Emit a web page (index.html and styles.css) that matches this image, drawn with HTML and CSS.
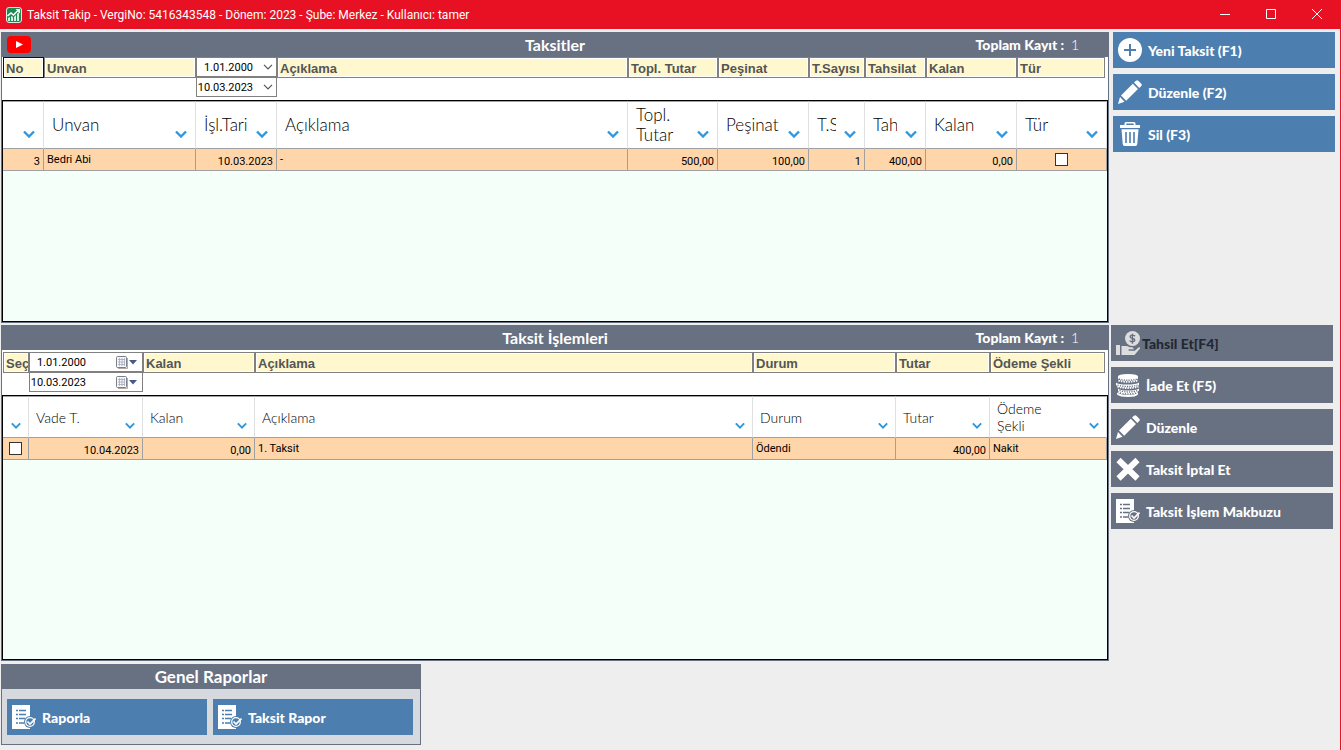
FILE: index.html
```html
<!DOCTYPE html>
<html lang="tr">
<head>
<meta charset="utf-8">
<title>Taksit Takip</title>
<link rel="stylesheet" href="styles.css">
</head>
<body>
<svg class="icon-defs" aria-hidden="true">
  <symbol id="i-down" viewBox="0 0 12 8"><path d="M1 1.5 6 6.5 11 1.5" fill="none" stroke="#2f97dd" stroke-width="2.4"/></symbol>
  <symbol id="i-chev" viewBox="0 0 10 6"><path d="M1 .8 5 4.8 9 .8" fill="none" stroke="#555" stroke-width="1.2"/></symbol>
  <symbol id="i-cal" viewBox="0 0 22 14">
    <rect x="1.5" y="1.5" width="10" height="11" rx="1" fill="#f6f7fa" stroke="#7d7d86"/>
    <path d="M3 4.5h7M3 7h7M3 9.500h7M4.500 3v8M7 3v8M9.500 3v8" stroke="#a3a9bd" stroke-width=".8"/>
    <path d="M12.500 3v10.500H3" fill="none" stroke="#b9a9a4"/>
    <path d="M14 5h8l-4 4.500z" fill="#47598a"/>
  </symbol>
  <symbol id="i-plus" viewBox="0 0 24 24"><circle cx="12" cy="12" r="12" fill="#fff"/><path d="M12 6v12M6 12h12" stroke="#4c7eaf" stroke-width="2"/></symbol>
  <symbol id="i-pencil" viewBox="0 0 24 24"><path fill="#fff" d="M0 24 2 17 6.500 21.800zM3 15.500 14.800 3.800 20 9 8.200 20.800zM16 2.600 18 .7q1.200-1 2.300 0l3 3q1 1.200 0 2.300l-2 2z"/></symbol>
  <symbol id="i-trash" viewBox="0 0 24 24">
    <path fill="#fff" fill-rule="evenodd" d="M8 0h8q1.500 0 1.500 1.500V3H22v3H2V3h4.500V1.500Q6.500 0 8 0zM8.300 1.600V3h7.400V1.600zM3.500 7.200h17L19.300 22q-.2 2-2 2H6.700q-1.800 0-2-2z"/>
    <path d="M8 10v11M12 10v11M16 10v11" stroke="#4c7eaf" stroke-width="1.600"/>
  </symbol>
  <symbol id="i-hand" viewBox="0 0 24 24">
    <circle cx="16.500" cy="7.500" r="7.500" fill="#ddd"/>
    <path d="M19 5.200q-1-1.200-2.700-1.100c-2.900.2-2.700 2.900 0 3.300 3.200.5 3.100 3.200 0 3.400q-1.900 0-2.700-1.300M16.400 2.700v10" fill="none" stroke="#687182" stroke-width="1.400"/>
    <path d="M0 14h4v10H0zM5.500 15h4.500q2 0 3.500 1.300h2.500q1.800.3 1.600 2h-5v1.400h6.200l3.800-3.300q1.400-.7 1.600.8L18.500 24h-13z" fill="#ddd"/>
  </symbol>
  <symbol id="i-coins" viewBox="0 0 24 24">
    <g fill="#fff">
      <path d="M2 3.500Q2 1 12 1t10 2.500v2Q21 8 12 8T2 5.500zM0 9.500Q2 11.500 11 11.500t12-2v2.500q-2 2.500-12 2.500T0 12zM2 15.500q2 2 10 2t11-2v2q-2 2.800-11 2.800T2 17.500zM1 19.500q3 2.300 11 2.300t10-2.300v2Q20 24 12 24T1 21.500z"/>
    </g>
    <path d="M2.500 7.500q9 2.500 19 0M1.500 13.500q10 3 21 0M2.500 19q10 3 19 0" fill="none" stroke="#fff" stroke-width="2" stroke-dasharray="1.500 1"/>
    <path d="M3 6q9 2.500 18 0M1.500 12q10 3 20 0M3.500 17.500q9 3 18 0" fill="none" stroke="#687182" stroke-width="1.300" stroke-dasharray="1.200 1.200"/>
  </symbol>
  <symbol id="i-cross" viewBox="0 0 24 24"><path d="M2.500 3 21.500 21.500M21.500 3 2.500 21.500" stroke="#fff" stroke-width="6"/></symbol>
  <symbol id="i-report" viewBox="0 0 24 24">
    <path d="M0 0h18v24H0z" fill="#fff"/>
    <path d="M4 5.500h2M4 9.500h2M4 13.500h2M4 18h2M7 5.500h7M7 9.500h7M7 13.500h6M7 18h5" stroke="currentColor" stroke-width="1.500"/>
    <circle cx="18" cy="17" r="6" fill="currentColor"/>
    <circle cx="18" cy="17" r="4.300" fill="none" stroke="#fff" stroke-width="1.300"/>
    <path d="m15.500 16.500 2.500 2.500 5.500-5.500" fill="none" stroke="#fff" stroke-width="1.700"/>
  </symbol>
</svg>

<div class="window">
  <header class="titlebar">
    <svg class="app-icon" viewBox="0 0 16 16">
      <rect x=".5" y=".5" width="15" height="15" rx="2.500" fill="#1d8a52" stroke="#d5efe0"/>
      <path d="M2 14v-3l2-1v4zM5 14V9l2 1v4zM8 14v-4l2-2v6zM11 14V7l2-2v9z" fill="#d5efe0"/>
      <path d="M1.500 9 5 6l2.500 2L13 2.500" fill="none" stroke="#fff" stroke-width="1.600"/>
      <path d="M9.500 2H14v4.500z" fill="#fff"/>
    </svg>
    <h1 class="titlebar-text">Taksit Takip - VergiNo: 5416343548 - Dönem: 2023 - Şube: Merkez - Kullanıcı: tamer</h1>
    <button class="win-btn" aria-label="Küçült"><svg viewBox="0 0 10 10"><path d="M0 5.500h10"/></svg></button>
    <button class="win-btn" aria-label="Ekranı kapla"><svg viewBox="0 0 10 10"><path d="M.5.5h9v9h-9z"/></svg></button>
    <button class="win-btn" aria-label="Kapat"><svg viewBox="0 0 10 10"><path d="m0 0 10 10M10 0 0 10"/></svg></button>
  </header>

  <main class="content">
    <div class="row row-top">
      <section class="panel">
        <div class="panel-head">
          <button class="youtube" aria-label="Video"><svg viewBox="0 0 24 17"><rect width="24" height="17" rx="4" fill="#f00"/><path d="M9 5v7l7-3.500z" fill="#fff"/></svg></button>
          <h2>Taksitler</h2>
          <p class="total"><b>Toplam Kayıt :</b> <span>1</span></p>
        </div>
        <div class="filters filters-top">
          <input class="filter focused" placeholder="No" aria-label="No">
          <input class="filter" placeholder="Unvan" aria-label="Unvan">
          <div class="dates">
            <div class="date"><input value="1.01.2000" aria-label="Başlangıç tarihi"><button aria-label="Tarih seç"><svg class="chev"><use href="#i-chev"/></svg></button></div>
            <div class="date"><input value="10.03.2023" aria-label="Bitiş tarihi"><button aria-label="Tarih seç"><svg class="chev"><use href="#i-chev"/></svg></button></div>
          </div>
          <input class="filter" placeholder="Açıklama" aria-label="Açıklama">
          <input class="filter" placeholder="Topl. Tutar" aria-label="Topl. Tutar">
          <input class="filter" placeholder="Peşinat" aria-label="Peşinat">
          <input class="filter" placeholder="T.Sayısı" aria-label="T.Sayısı">
          <input class="filter" placeholder="Tahsilat" aria-label="Tahsilat">
          <input class="filter" placeholder="Kalan" aria-label="Kalan">
          <input class="filter last" placeholder="Tür" aria-label="Tür">
        </div>
        <div class="grid-box">
          <table class="grid grid-top">
            <colgroup><col class="w41"><col class="w152"><col class="w81"><col><col class="w90"><col class="w91"><col class="w56"><col class="w61"><col class="w91"><col class="w90"></colgroup>
            <thead>
              <tr>
                <th><div class="th"><span></span><svg class="down"><use href="#i-down"/></svg></div></th>
                <th><div class="th"><span>Unvan</span><svg class="down"><use href="#i-down"/></svg></div></th>
                <th><div class="th"><span>İşl.Tarih</span><svg class="down"><use href="#i-down"/></svg></div></th>
                <th><div class="th"><span>Açıklama</span><svg class="down"><use href="#i-down"/></svg></div></th>
                <th><div class="th"><span>Topl.<br>Tutar</span><svg class="down"><use href="#i-down"/></svg></div></th>
                <th><div class="th"><span>Peşinat</span><svg class="down"><use href="#i-down"/></svg></div></th>
                <th><div class="th"><span>T.Sa</span><svg class="down"><use href="#i-down"/></svg></div></th>
                <th><div class="th"><span>Tah</span><svg class="down"><use href="#i-down"/></svg></div></th>
                <th><div class="th"><span>Kalan</span><svg class="down"><use href="#i-down"/></svg></div></th>
                <th><div class="th"><span>Tür</span><svg class="down"><use href="#i-down"/></svg></div></th>
              </tr>
            </thead>
            <tbody>
              <tr>
                <td class="num">3</td>
                <td>Bedri Abi</td>
                <td class="num">10.03.2023</td>
                <td>-</td>
                <td class="num">500,00</td>
                <td class="num">100,00</td>
                <td class="num">1</td>
                <td class="num">400,00</td>
                <td class="num">0,00</td>
                <td class="check"><input type="checkbox" aria-label="Tür"></td>
              </tr>
            </tbody>
          </table>
        </div>
      </section>
      <nav class="actions">
        <button class="btn blue"><svg><use href="#i-plus"/></svg>Yeni Taksit (F1)</button>
        <button class="btn blue"><svg><use href="#i-pencil"/></svg>Düzenle (F2)</button>
        <button class="btn blue"><svg><use href="#i-trash"/></svg>Sil (F3)</button>
      </nav>
    </div>

    <div class="row row-bottom">
      <section class="panel">
        <div class="panel-head">
          <span></span>
          <h2>Taksit İşlemleri</h2>
          <p class="total"><b>Toplam Kayıt :</b> <span>1</span></p>
        </div>
        <div class="filters filters-bottom">
          <input class="filter" placeholder="Seç" aria-label="Seç">
          <div class="dates">
            <div class="date"><input value="1.01.2000" aria-label="Başlangıç vade tarihi"><button aria-label="Tarih seç"><svg class="cal"><use href="#i-cal"/></svg></button></div>
            <div class="date"><input value="10.03.2023" aria-label="Bitiş vade tarihi"><button aria-label="Tarih seç"><svg class="cal"><use href="#i-cal"/></svg></button></div>
          </div>
          <input class="filter" placeholder="Kalan" aria-label="Kalan">
          <input class="filter" placeholder="Açıklama" aria-label="Açıklama">
          <input class="filter" placeholder="Durum" aria-label="Durum">
          <input class="filter" placeholder="Tutar" aria-label="Tutar">
          <input class="filter last" placeholder="Ödeme Şekli" aria-label="Ödeme Şekli">
        </div>
        <div class="grid-box">
          <table class="grid grid-bottom">
            <colgroup><col class="w26"><col class="w114"><col class="w112"><col><col class="w143"><col class="w94"><col class="w117"></colgroup>
            <thead>
              <tr>
                <th><div class="th"><span></span><svg class="down"><use href="#i-down"/></svg></div></th>
                <th><div class="th"><span>Vade T.</span><svg class="down"><use href="#i-down"/></svg></div></th>
                <th><div class="th"><span>Kalan</span><svg class="down"><use href="#i-down"/></svg></div></th>
                <th><div class="th"><span>Açıklama</span><svg class="down"><use href="#i-down"/></svg></div></th>
                <th><div class="th"><span>Durum</span><svg class="down"><use href="#i-down"/></svg></div></th>
                <th><div class="th"><span>Tutar</span><svg class="down"><use href="#i-down"/></svg></div></th>
                <th><div class="th"><span>Ödeme<br>Şekli</span><svg class="down"><use href="#i-down"/></svg></div></th>
              </tr>
            </thead>
            <tbody>
              <tr>
                <td class="check"><input type="checkbox" aria-label="Seç"></td>
                <td class="num">10.04.2023</td>
                <td class="num">0,00</td>
                <td>1. Taksit</td>
                <td>Ödendi</td>
                <td class="num">400,00</td>
                <td>Nakit</td>
              </tr>
            </tbody>
          </table>
        </div>
      </section>
      <nav class="actions">
        <button class="btn gray" disabled><svg><use href="#i-hand"/></svg>Tahsil Et[F4]</button>
        <button class="btn gray"><svg><use href="#i-coins"/></svg>İade Et (F5)</button>
        <button class="btn gray"><svg><use href="#i-pencil"/></svg>Düzenle</button>
        <button class="btn gray"><svg><use href="#i-cross"/></svg>Taksit İptal Et</button>
        <button class="btn gray"><svg><use href="#i-report"/></svg>Taksit İşlem Makbuzu</button>
      </nav>
    </div>

    <section class="reports">
      <h2>Genel Raporlar</h2>
      <div class="report-list">
        <button class="btn blue"><svg><use href="#i-report"/></svg>Raporla</button>
        <button class="btn blue"><svg><use href="#i-report"/></svg>Taksit Rapor</button>
      </div>
    </section>
  </main>
</div>
</body>
</html>
```
FILE: styles.css
```css
* {
  box-sizing: border-box;
}
body {
  margin: 0;
  background: #eee;
  font-family: Lato, "Liberation Sans", sans-serif;
  color: #000;
}
h1, h2, p {
  margin: 0;
}
button {
  border: 0;
  padding: 0;
  background: none;
  font-family: inherit;
}
svg {
  display: block;
}
.icon-defs {
  display: none;
}
.window {
  display: flex;
  flex-direction: column;
  min-height: 100vh;
  margin-right: 1px;
  border-right: 1px solid #e81123;
}

/* title bar */
.titlebar {
  display: flex;
  align-items: center;
  height: 29px;
  padding-left: 6px;
  background: #e81123;
  color: #fff;
}
.app-icon {
  width: 16px;
  height: 16px;
  margin-right: 5px;
}
.titlebar-text {
  flex: 1;
  font: 12px Roboto, sans-serif;
}
.win-btn {
  width: 46px;
  height: 29px;
}
.win-btn svg {
  width: 10px;
  height: 10px;
  margin: 0 auto 2px;
  fill: none;
  stroke: #fff;
}

/* layout */
.content {
  flex: 1;
  display: flex;
  flex-direction: column;
  padding: 3px 0 5px 1px;
}
.row {
  display: flex;
}
.row-top {
  flex: 291 1 0;
  gap: 4px;
  padding-right: 5px;
  margin-bottom: 2px;
}
.row-bottom {
  flex: 336 1 0;
  gap: 2px;
  padding-right: 7px;
  margin-bottom: 3px;
}
.panel {
  flex: 1;
  min-width: 0;
  display: flex;
  flex-direction: column;
  border: 1px solid #687182;
  border-top: 0;
  background: #fff;
}
.panel-head {
  display: grid;
  grid-template-columns: 1fr auto 1fr;
  align-items: center;
  height: 25px;
  padding: 0 5px;
  background: #687182;
  color: #fff;
}
.panel-head h2 {
  font-size: 16px;
  font-weight: 700;
}
.youtube {
  width: 24px;
}
.total {
  margin-right: 24px;
  text-align: right;
  font-size: 14px;
}
.total b {
  margin-right: 3px;
  font-weight: 900;
}
.total span {
  font-weight: 300;
}

/* filters */
.filters {
  display: grid;
  align-items: start;
  padding: 0 1px;
}
.filters-top {
  grid-template-columns: 41px 152px 81px 1fr 90px 91px 56px 61px 91px 90px;
  height: 43px;
}
.filters-bottom {
  grid-template-columns: 26px 114px 112px 1fr 143px 94px 117px;
  height: 45px;
  padding-top: 2px;
}
.filter {
  width: 100%;
  min-width: 0;
  height: 21px;
  border: 1px solid #808080;
  padding: 2px 0 0 2px;
  background: #fff8cf;
  box-shadow: inset 0 0 0 1px #fff;
  font: bold 13px "Liberation Sans", sans-serif;
}
.filter::placeholder {
  color: #555;
  opacity: 1;
}
.filter.focused {
  border-color: #111;
}
.filter.last {
  width: calc(100% - 2px);
}
.date {
  display: flex;
  align-items: center;
  height: 20px;
  border: 1px solid #808080;
  background: #fff;
}
.date input {
  width: 56px;
  border: 0;
  padding: 0;
  background: none;
  font: 11px Roboto, sans-serif;
  text-align: right;
}
.date button {
  margin-left: auto;
}
.chev {
  width: 10px;
  height: 6px;
  margin-right: 3px;
}
.cal {
  width: 22px;
  height: 14px;
  margin-right: 5px;
}

/* tables */
.grid-box {
  flex: 1;
  border: 1px solid #000;
  background: #f5fffa;
}
.grid {
  width: 100%;
  table-layout: fixed;
  border-collapse: separate;
  border-spacing: 0;
}
.w26 { width: 26px; }
.w41 { width: 41px; }
.w56 { width: 56px; }
.w61 { width: 61px; }
.w81 { width: 81px; }
.w90 { width: 90px; }
.w91 { width: 91px; }
.w94 { width: 94px; }
.w112 { width: 112px; }
.w114 { width: 114px; }
.w117 { width: 117px; }
.w143 { width: 143px; }
.w152 { width: 152px; }
.grid th {
  padding: 0;
  border-top: 1px solid #a0a0a0;
  border-right: 1px solid #e0e0e0;
  border-bottom: 1px solid #a0a0a0;
  background: #fff;
  font-weight: 300;
  text-align: left;
}
.th {
  display: flex;
  align-items: center;
  gap: 8px;
  padding: 0 8px;
}
.th span {
  flex: 1;
  min-width: 0;
  overflow: hidden;
  white-space: nowrap;
}
.down {
  flex: none;
  width: 12px;
  height: 8px;
  margin-top: 18px;
}
.grid-top .th {
  height: 46px;
  font-size: 17px;
  line-height: 20px;
}
.grid-bottom .th {
  height: 40px;
  padding: 0 7px;
  font-size: 14px;
  line-height: 17px;
}
.grid-bottom .down {
  width: 10px;
  height: 7px;
  margin-top: 16px;
}
.grid-bottom th:first-child .th {
  gap: 0;
}
.grid td {
  height: 22px;
  padding: 0 3px;
  border-right: 1px solid #a0a0a0;
  border-bottom: 1px solid #a0a0a0;
  background: #ffd5aa;
  font: 11px/20px Roboto, sans-serif;
}
.grid .num {
  padding-top: 5px;
  line-height: 16px;
  text-align: right;
}
.check {
  text-align: center;
}
.check input {
  display: block;
  appearance: none;
  width: 13px;
  height: 13px;
  margin: 0 auto;
  border: 1px solid #333;
  background: #fff;
}

/* buttons */
.actions {
  display: flex;
  flex-direction: column;
  gap: 6px;
  width: 222px;
}
.btn {
  display: flex;
  align-items: center;
  gap: 6px;
  height: 36px;
  padding: 0 5px;
  color: #fff;
  font-size: 14px;
  font-weight: 900;
}
.btn svg {
  flex: none;
  width: 24px;
  height: 24px;
}
.blue {
  background: #4c7eaf;
}
.blue svg {
  color: #4c7eaf;
}
.gray {
  background: #687182;
}
.gray svg {
  color: #687182;
}
.btn:disabled {
  gap: 2px;
  color: #222831;
}

/* reports */
.reports {
  width: 420px;
  border: 1px solid #687182;
  border-top: 0;
  background: #d6d9de;
}
.reports h2 {
  background: #687182;
  color: #fff;
  font-size: 17px;
  line-height: 25px;
  text-align: center;
}
.report-list {
  display: flex;
  gap: 6px;
  padding: 10px 7px 9px 5px;
}
.report-list .btn {
  flex: 1;
}
```
